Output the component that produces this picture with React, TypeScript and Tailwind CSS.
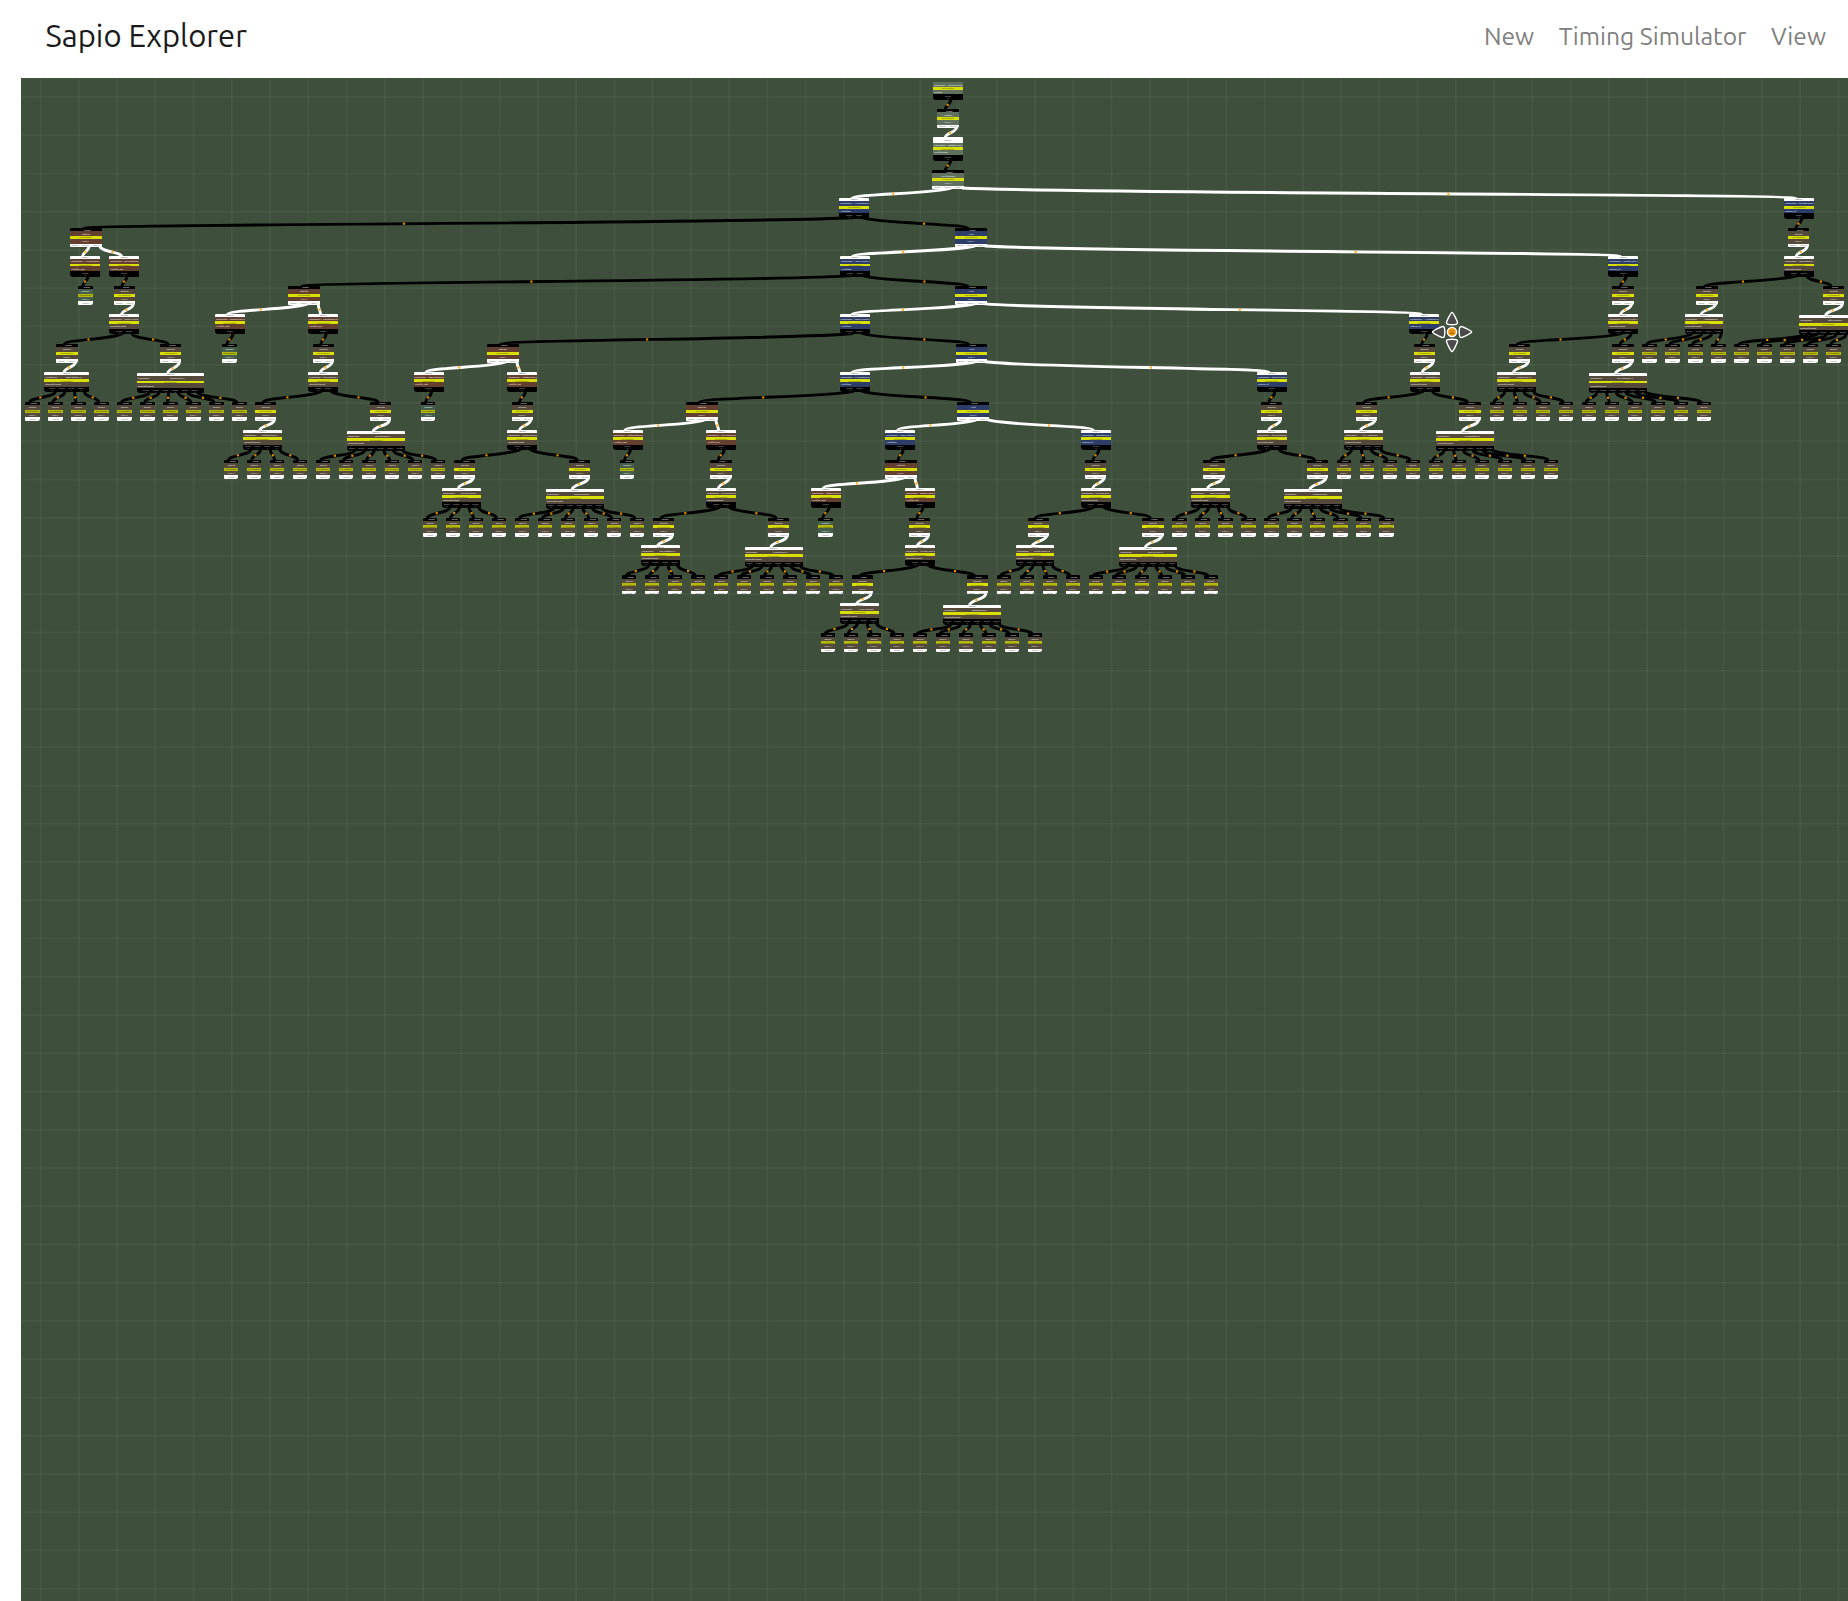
import React from "react";

type Tone = "earth" | "rust" | "navy" | "sage" | "moss";
type Box = { x: number; y: number; w: number };
type Tx = Box & { tone: Tone; name: string; ports: number; input: number };
type Out = Box & { tone: Tone; name: string; ports: number };
type Edge = { x1: number; y1: number; x2: number; y2: number; dark: boolean };

const PITCH = 57.9;
const txs: Tx[] = [];
const outs: Out[] = [];
const edges: Edge[] = [];

const tones: Record<Tone, string> = {
  earth: "bg-[#54493a]",
  rust: "bg-[#643f2f]",
  navy: "bg-[#2d3d68]",
  sage: "bg-[#60705f]",
  moss: "bg-[#465f4d]",
};

const txHeight = (t: Tx) => t.input + 12 + (t.ports > 4 ? 5.4 : 5.7);

function addTx(x: number, row: number, tone: Tone, name: string, ports = 1, w = 30): Tx {
  const t = { x, y: 198 + PITCH * row + (ports > 4 ? 1.2 : 0), w, tone, name, ports, input: 3 };
  txs.push(t);
  return t;
}

function addOut(x: number, row: number, tone: Tone, name: string, ports: number): Out {
  const o = { x, y: 228 + PITCH * row, w: [14.3, 21.3, 31.5][ports - 1], tone, name, ports };
  outs.push(o);
  return o;
}

// Transaction output port -> output node
function spend(t: Tx, port: number, o: Out) {
  const x1 = t.x + t.w / 2 + 3 + (port - (t.ports - 1) / 2) * 9.7;
  edges.push({ x1, y1: t.y + txHeight(t) - 1, x2: o.x + o.w / 2 - 2.7, y2: o.y + 0.6, dark: true });
}

// Output node port -> transaction input
function feed(o: Out, t: Tx, port = 1) {
  const x1 = o.x + (o.ports === 2 ? 19.2 : port === 1 ? 19 : 30);
  edges.push({ x1, y1: o.y + 18, x2: t.x + t.w / 2 - 2.7, y2: t.y + 0.6, dark: false });
}

// An output feeding a split transaction, which pays four and then six leaves
function payouts(
  parent: Tx,
  row: number,
  outX: number,
  splitX: number,
  a: number,
  b: number,
  fourX: number,
  sixX: number,
  leafA: number,
  leafB: number,
  fourW = 38.5,
  sixW = 58,
) {
  const entry = addOut(outX, row, "earth", "payouts", 2);
  spend(parent, 0, entry);
  const split = addTx(splitX, row + 1, "earth", "payouts/expand", 2);
  feed(entry, split);
  const sides = [
    { x: a, txX: fourX, w: fourW, n: 4, leaf: leafA },
    { x: b, txX: sixX, w: sixW, n: 6, leaf: leafB },
  ];
  sides.forEach((s, i) => {
    const o = addOut(s.x, row + 1, "earth", "payouts", 2);
    spend(split, i, o);
    const t = addTx(s.txX, row + 2, "earth", "payouts/expand", s.n, s.w);
    feed(o, t);
    for (let k = 0; k < s.n; k++) spend(t, k, addOut(s.leaf + 23 * k, row + 2, "earth", "payout", 1));
  });
}

// A vault exit: one branch to cold storage and one to the payout tree
function exit(parent: Tx, row: number, x: number, coldX: number, coldLeaf: number, hotX: number): Tx {
  const o = addOut(x, row, "rust", "cold-hot", 3);
  spend(parent, 0, o);
  const cold = addTx(coldX, row + 1, "rust", "Vault/to_cold");
  feed(o, cold, 1);
  spend(cold, 0, addOut(coldLeaf, row + 1, "moss", "Deposit", 1));
  const hot = addTx(hotX, row + 1, "rust", "Vault/to_hot");
  feed(o, hot, 2);
  return hot;
}

// Root chain
const root: Tx = { x: 933, y: 82.3, w: 30, tone: "sage", name: "Funding", ports: 1, input: 0 };
const second: Tx = { x: 933, y: 137, w: 30, tone: "sage", name: "Vault/Custody", ports: 1, input: 5.8 };
const rootOut: Out = { x: 937.3, y: 109, w: 21.3, tone: "sage", name: "Funding", ports: 2 };
const secondOut: Out = { x: 932.3, y: 170, w: 31.5, tone: "sage", name: "Vault/Custody", ports: 3 };
txs.push(root, second);
outs.push(rootOut, secondOut);
spend(root, 0, rootOut);
feed(rootOut, second);
spend(second, 0, secondOut);

const v0 = addTx(839.3, 0, "navy", "Vault/step", 2);
const r0 = addTx(1784, 0, "navy", "redeem_all");
feed(secondOut, v0, 1);
feed(secondOut, r0, 2);
payouts(r0, 0, 1788, 1784, 1696.3, 1823, 1684.5, 1799.3, 1642.3, 1734.3);

const e0 = exit(v0, 0, 70, 70.3, 78.3, 109.3);
payouts(e0, 1, 114, 109.3, 56.3, 160.2, 44.3, 136.7, 25.3, 117.3, 45, 67.5);
const w0 = addOut(955.2, 0, "navy", "Vault", 3);
spend(v0, 1, w0);

const v1 = addTx(840, 1, "navy", "Vault/step", 2);
const r1 = addTx(1608.3, 1, "navy", "redeem_all");
feed(w0, v1, 1);
feed(w0, r1, 2);
payouts(r1, 1, 1612.3, 1608.3, 1509, 1612.3, 1497, 1589.2, 1489.7, 1581.7);
const e1 = exit(v1, 1, 288.3, 215, 222.3, 308.2);
payouts(e1, 2, 312.8, 308.2, 255.2, 370.2, 243.2, 347, 224.2, 316.2);
const w1 = addOut(955.4, 1, "navy", "Vault", 3);
spend(v1, 1, w1);

const v2 = addTx(839.5, 2, "navy", "Vault/step", 2);
const r2 = addTx(1409.3, 2, "navy", "redeem_all");
feed(w1, v2, 1);
feed(w1, r2, 2);
payouts(r2, 2, 1413.7, 1410, 1356, 1459.3, 1344, 1436.3, 1336.5, 1428.5);
const e2 = exit(v2, 2, 487, 413.5, 421.2, 507.3);
payouts(e2, 3, 511.5, 507.3, 454.2, 569.2, 442, 546, 423, 515.2);
const w2 = addOut(955.7, 2, "navy", "Vault", 3);
spend(v2, 1, w2);

const v3 = addTx(839.8, 3, "navy", "Vault/step", 2);
const r3 = addTx(1256.8, 3, "navy", "redeem_all");
feed(w2, v3, 1);
feed(w2, r3, 2);
payouts(r3, 3, 1261, 1256.5, 1203.3, 1306.7, 1191.3, 1283.7, 1172.3, 1264.3);
const e3 = exit(v3, 3, 686, 612.5, 620, 706.2);
payouts(e3, 4, 710.3, 706.2, 653, 768, 641, 744.5, 622, 714);
const w3 = addOut(957.4, 3, "navy", "Vault", 3);
spend(v3, 1, w3);

const v4 = addTx(885.3, 4, "navy", "Vault/step");
const r4 = addTx(1081, 4, "navy", "redeem_all");
feed(w3, v4, 1);
feed(w3, r4, 2);
payouts(r4, 4, 1085, 1080.7, 1027.5, 1142.3, 1015.7, 1119.2, 996.5, 1088.5);
const e4 = exit(v4, 4, 885, 811, 818.3, 905);
payouts(e4, 5, 909, 905, 851.8, 966.5, 840, 943.4, 820.7, 912.7);

const hash = (i: number) => ((i + 3) * 2654435761 % 4294967296).toString(16).padStart(8, "0") + "c0e" + i;

function TxNode({ t, i }: { t: Tx; i: number }) {
  return (
    <div
      className="absolute flex flex-col overflow-hidden rounded-t-[1px] rounded-bl-[3px] rounded-br-[1px] text-[2.2px] leading-none whitespace-nowrap text-white"
      style={{ left: t.x - 21, top: t.y - 78, width: t.w, height: txHeight(t) }}
    >
      {t.input > 0 && (
        <div className="flex shrink-0 items-center justify-center bg-white text-[#333]" style={{ height: t.input }}>
          input 0
        </div>
      )}
      <div className={`flex h-[4.7px] shrink-0 items-center gap-[1.5px] px-px ${tones[t.tone]}`}>
        <span>Transaction :</span>
        <span className="flex-1 text-center">{hash(i)}</span>
      </div>
      <div className="flex h-[2.9px] shrink-0 items-center justify-center bg-[#d9de05] text-[2px] text-[#4b4c00]">
        not broadcast
      </div>
      <div className={`flex h-[4.4px] shrink-0 items-center px-px ${tones[t.tone]}`}>{t.name}</div>
      <div className="flex flex-1 justify-center bg-black pt-[0.8px] text-[#c9c9c9]">
        {Array.from({ length: t.ports }, (_, k) => (
          <div key={k} className="w-[9.7px] text-center text-[2px]">
            output
            <br />
            {k}
          </div>
        ))}
      </div>
    </div>
  );
}

function OutNode({ o }: { o: Out }) {
  const labels = ["spend", "input 0", "input 1"].slice(0, o.ports);
  const leaf = o.ports === 1;
  return (
    <div
      className="absolute flex h-[19px] flex-col overflow-hidden rounded-t-[1px] rounded-br-[2.5px] rounded-bl-[1px] text-[2.2px] leading-none whitespace-nowrap text-white"
      style={{ left: o.x - 21, top: o.y - 78, width: o.w }}
    >
      <div className="flex h-[3.4px] items-center justify-center bg-black pl-[3px]">create</div>
      <div className={`flex h-[4.6px] items-center justify-center ${tones[o.tone]}`}>{o.name}</div>
      <div
        className={`flex h-[3px] items-center justify-center text-[2px] ${leaf ? "bg-[#b6ba0c] text-[#2e2f00]" : "bg-[#d9de05] text-[#4b4c00]"}`}
      >
        not broadcast
      </div>
      <div className={`flex h-[4.6px] items-center justify-center ${tones[o.tone]}`}>0.0012</div>
      <div className="flex flex-1 items-center justify-around bg-white text-[#666]">
        {labels.map((l) => (
          <span key={l}>{l}</span>
        ))}
      </div>
    </div>
  );
}

function Wires() {
  return (
    <svg className="absolute inset-0 h-full w-full" viewBox="21 78 1827 1523" fill="none">
      {edges.map((e, i) => {
        const dx = e.x2 - e.x1;
        const m = e.y1 + (e.y2 - e.y1) * 0.55;
        const c = e.x1 + dx * (Math.abs(dx) < 45 ? 0 : 0.15);
        return (
          <path
            key={i}
            d={`M${e.x1} ${e.y1}C${c} ${m} ${e.x2} ${m} ${e.x2} ${e.y2}`}
            stroke={e.dark ? "#000" : "#fff"}
            strokeWidth={2.9}
            strokeLinecap="round"
          />
        );
      })}
      {edges.map((e, i) => (
        <rect
          key={i}
          x={e.x1 + (e.x2 - e.x1) * 0.583 - 1.1}
          y={e.y1 + (e.y2 - e.y1) * 0.55 - 1.1}
          width={2.2}
          height={2.2}
          fill={e.dark ? "#e08c00" : "#ffae2b"}
        />
      ))}
    </svg>
  );
}

function PanCursor() {
  return (
    <svg className="absolute top-[233.3px] left-[1410px] h-[42px] w-[42px]" viewBox="-21 -21 42 42">
      {[0, 90, 180, 270].map((a) => (
        <path
          key={a}
          transform={`rotate(${a})`}
          d="M0 -19.6C1.3 -19.2 5.8 -10.2 5.5 -8.7C4.8 -6.7 -4.8 -6.7 -5.5 -8.7C-5.8 -10.2 -1.3 -19.2 0 -19.6Z"
          fill="#4a4a4a"
          stroke="#fff"
          strokeWidth="1.4"
          strokeLinejoin="round"
        />
      ))}
      <circle r="4.6" fill="#f39a12" stroke="#fff" strokeWidth="1.3" />
      <path d="M-2 -1.6L-1 -0.6M2 -1.6L1 -0.6M-2.2 1.8L-0.8 1L0.8 1L2.2 1.8" stroke="#7a4700" strokeWidth="0.9" fill="none" />
    </svg>
  );
}

export default function App() {
  return (
    <div className="flex h-[1601px] w-[1848px] flex-col overflow-hidden bg-white font-['Ubuntu','Noto_Sans',sans-serif]">
      <header className="flex h-[78px] shrink-0 items-center justify-between pr-[22px] pb-[6px] pl-[45.5px]">
        <a className="text-[31px] text-[#1a1a1a]">Sapio Explorer</a>
        <nav className="flex gap-[24.5px] text-[24.6px] text-[#808080]">
          <a>New</a>
          <a>Timing Simulator</a>
          <a>View</a>
        </nav>
      </header>
      <main className="relative ml-[21px] flex-1 overflow-hidden bg-[#3e503c] bg-[repeating-linear-gradient(90deg,transparent_0px,transparent_18.4px,#ffffff0b_19.2px,#ffffff0b_20px,transparent_20.8px,transparent_38.25px),repeating-linear-gradient(180deg,transparent_0px,transparent_17.8px,#ffffff0b_18.6px,#ffffff0b_19.4px,transparent_20.2px,transparent_38.25px)]">
        <Wires />
        {txs.map((t, i) => (
          <TxNode key={i} t={t} i={i} />
        ))}
        {outs.map((o, i) => (
          <OutNode key={i} o={o} />
        ))}
        <PanCursor />
      </main>
    </div>
  );
}
